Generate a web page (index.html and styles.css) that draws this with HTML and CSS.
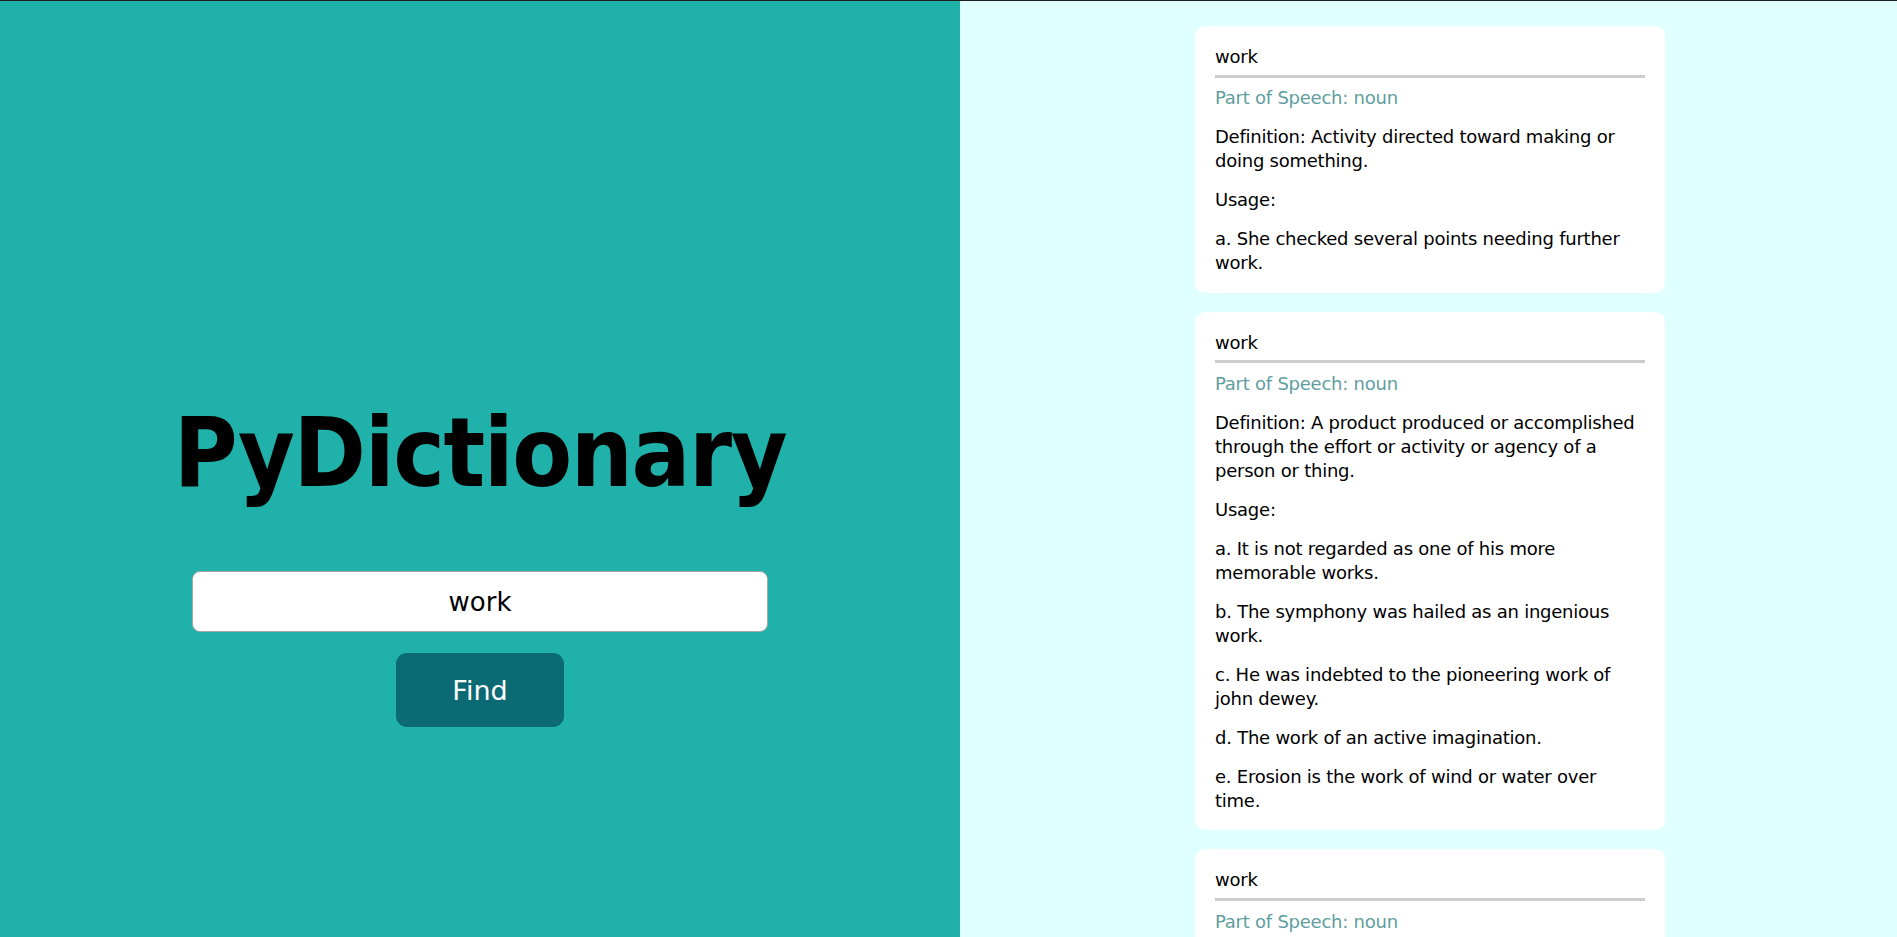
FILE: index.html
```html
<!DOCTYPE html>
<html lang="en">
<head>
<meta charset="utf-8">
<title>PyDictionary</title>
<link rel="stylesheet" href="styles.css">
</head>
<body>
<div class="app">
  <section class="search-panel">
    <h1 class="brand">PyDictionary</h1>
    <form class="search-form">
      <input class="search-input" type="text" value="work">
      <button class="find-btn" type="button">Find</button>
    </form>
  </section>
  <section class="results">
    <article class="card">
      <div class="card-word">work</div>
      <p class="pos">Part of Speech: noun</p>
      <p>Definition: Activity directed toward making or doing something.</p>
      <p>Usage:</p>
      <p>a. She checked several points needing further work.</p>
    </article>
    <article class="card">
      <div class="card-word">work</div>
      <p class="pos">Part of Speech: noun</p>
      <p>Definition: A product produced or accomplished through the effort or activity or agency of a person or thing.</p>
      <p>Usage:</p>
      <p>a. It is not regarded as one of his more memorable works.</p>
      <p>b. The symphony was hailed as an ingenious work.</p>
      <p>c. He was indebted to the pioneering work of john dewey.</p>
      <p>d. The work of an active imagination.</p>
      <p>e. Erosion is the work of wind or water over time.</p>
    </article>
    <article class="card">
      <div class="card-word">work</div>
      <p class="pos">Part of Speech: noun</p>
      <p>Definition: (physics) A manifestation of energy; the transfer of energy from one physical system to another.</p>
      <p>Usage:</p>
      <p>a. The work done by a force.</p>
    </article>
  </section>
</div>
</body>
</html>
```
FILE: styles.css
```css
* {
  box-sizing: border-box;
}

html, body {
  margin: 0;
  padding: 0;
}

body {
  font-family: "DejaVu Sans", Verdana, sans-serif;
  font-size: 18px;
  color: #000;
}

.app {
  display: flex;
  height: 100vh;
  border-top: 1px solid #1c1c1c;
  overflow: hidden;
}

.search-panel {
  flex: 0 0 960px;
  background: #20b2aa;
  display: flex;
  flex-direction: column;
  align-items: center;
  padding-top: 395px;
}

.brand {
  margin: 0 0 62px;
  font-family: "DejaVu Sans Condensed", "DejaVu Sans", sans-serif;
  font-stretch: condensed;
  font-weight: bold;
  font-size: 97px;
  line-height: 113px;
  letter-spacing: -1.4px;
}

.search-form {
  width: 100%;
  display: flex;
  flex-direction: column;
  align-items: center;
}

.search-input {
  width: 576px;
  height: 61px;
  border: 1px solid #a5a5a5;
  border-radius: 8px;
  background: #fff;
  font-family: "DejaVu Sans", Verdana, sans-serif;
  font-size: 26px;
  text-align: center;
  color: #000;
  padding: 0 10px;
  outline: none;
}

.find-btn {
  margin-top: 21px;
  width: 168px;
  height: 74px;
  border: none;
  border-radius: 11px;
  background: #0c6a74;
  color: #fff;
  font-family: "DejaVu Sans", Verdana, sans-serif;
  font-size: 27px;
}

.results {
  flex: 1;
  background: #e0ffff;
  display: flex;
  flex-direction: column;
  align-items: center;
  gap: 19px;
  padding: 25px 0 25px 3px;
  overflow: hidden;
}

.card {
  flex: none;
  width: 470px;
  background: #fff;
  border-radius: 10px;
  padding: 19px 20px 17.5px;
  letter-spacing: -0.24px;
  line-height: 24.2px;
}

.card-word {
  padding-bottom: 5.5px;
  border-bottom: 3px solid #cccccc;
  margin-bottom: 8.5px;
}

.card p {
  margin: 0 0 14.6px;
}

.card p:last-child {
  margin-bottom: 0;
}

.card .pos {
  color: #5f9ea0;
}
```
